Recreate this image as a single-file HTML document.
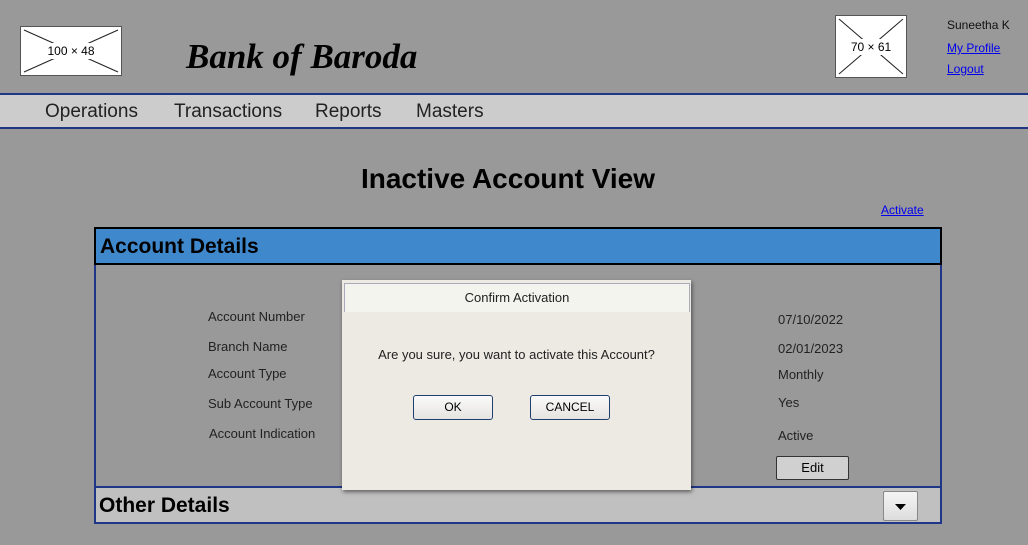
<!DOCTYPE html>
<html><head><style>
*{margin:0;padding:0;box-sizing:border-box}
body{width:1028px;height:545px;background:#999;font-family:"Liberation Sans",sans-serif;position:relative;overflow:hidden}
.a{position:absolute}
.ph{background:#fff;border:1px solid #555}
.t{font-size:13px;color:#222}
</style></head><body>
<div class="a ph" style="left:20px;top:26px;width:102px;height:50px">
<svg width="100" height="48" style="position:absolute;left:0;top:0"><line x1="3" y1="3" x2="97" y2="45" stroke="#222"/><line x1="97" y1="3" x2="3" y2="45" stroke="#222"/><rect x="22" y="16" width="56" height="16" fill="#fff"/></svg>
<div class="a" style="left:0;width:100px;top:17px;text-align:center;font-size:12px">100 × 48</div></div>
<div class="a" style="left:186px;top:37px;font-family:'Liberation Serif',serif;font-style:italic;font-weight:bold;font-size:35px">Bank of Baroda</div>
<div class="a ph" style="left:835px;top:15px;width:72px;height:63px">
<svg width="70" height="61" style="position:absolute;left:0;top:0"><line x1="3" y1="3" x2="67" y2="58" stroke="#222"/><line x1="67" y1="3" x2="3" y2="58" stroke="#222"/><rect x="13" y="23" width="44" height="16" fill="#fff"/></svg>
<div class="a" style="left:0;width:70px;top:24px;text-align:center;font-size:12px">70 × 61</div></div>
<div class="a" style="left:947px;top:18px;font-size:12px;color:#111">Suneetha K</div>
<div class="a" style="left:947px;top:41px;font-size:12px;color:#00e;text-decoration:underline">My Profile</div>
<div class="a" style="left:947px;top:62px;font-size:12px;color:#00e;text-decoration:underline">Logout</div>
<div class="a" style="left:0;top:93px;width:1028px;height:36px;background:#ccc;border-top:2px solid #1f3585;border-bottom:2px solid #1f3585"></div>
<div class="a" style="left:45px;top:101px;font-size:19px;color:#222">Operations</div>
<div class="a" style="left:174px;top:101px;font-size:19px;color:#222">Transactions</div>
<div class="a" style="left:315px;top:101px;font-size:19px;color:#222">Reports</div>
<div class="a" style="left:416px;top:101px;font-size:19px;color:#222">Masters</div>
<div class="a" style="left:0;width:1016px;top:163px;text-align:center;font-size:28px;font-weight:bold">Inactive Account View</div>
<div class="a" style="left:881px;top:203px;font-size:12px;color:#00e;text-decoration:underline">Activate</div>
<div class="a" style="left:94px;top:262px;width:848px;height:262px;border:2px solid #1f3585;border-top:none"></div>
<div class="a" style="left:94px;top:227px;width:848px;height:38px;background:#3f88cc;border:2px solid #000"></div>
<div class="a" style="left:100px;top:235px;font-size:21px;font-weight:bold">Account Details</div>
<div class="a t" style="left:208px;top:309px">Account Number</div>
<div class="a t" style="left:208px;top:339px">Branch Name</div>
<div class="a t" style="left:208px;top:366px">Account Type</div>
<div class="a t" style="left:208px;top:396px">Sub Account Type</div>
<div class="a t" style="left:209px;top:426px">Account Indication</div>
<div class="a t" style="left:778px;top:312px">07/10/2022</div>
<div class="a t" style="left:778px;top:341px">02/01/2023</div>
<div class="a t" style="left:778px;top:367px">Monthly</div>
<div class="a t" style="left:778px;top:395px">Yes</div>
<div class="a t" style="left:778px;top:428px">Active</div>
<div class="a" style="left:776px;top:456px;width:73px;height:24px;background:#d0d0d0;border:1px solid #333;border-radius:2px;text-align:center;font-size:13px;line-height:22px">Edit</div>
<div class="a" style="left:96px;top:486px;width:844px;height:36px;background:#c0c0c0;border-top:2px solid #1f3585"></div>
<div class="a" style="left:99px;top:494px;font-size:21px;font-weight:bold">Other Details</div>
<div class="a" style="left:883px;top:491px;width:35px;height:30px;background:linear-gradient(#f4f4f4,#ddd);border:1px solid #888;border-radius:2px"><svg width="33" height="28"><polygon points="11,12 22,12 16.5,18" fill="#000"/></svg></div>
<div class="a" style="left:342px;top:280px;width:349px;height:210px;background:#edeae4;box-shadow:1px 2px 4px rgba(0,0,0,.5)">
<div style="margin:3px 1px 0 2px;height:29px;background:#f4f4ee;border:1px solid #aab;border-bottom:none;text-align:center;font-size:13px;line-height:28px;color:#222">Confirm Activation</div>
<div class="a" style="left:0;width:349px;top:67px;text-align:center;font-size:13px;color:#222">Are you sure, you want to activate this Account?</div>
<div class="a" style="left:71px;top:115px;width:80px;height:25px;border:1px solid #1f3f6f;border-radius:3px;background:linear-gradient(#fafafa,#e6e4e0);text-align:center;font-size:12px;line-height:23px">OK</div>
<div class="a" style="left:188px;top:115px;width:80px;height:25px;border:1px solid #1f3f6f;border-radius:3px;background:linear-gradient(#fafafa,#e6e4e0);text-align:center;font-size:12px;line-height:23px">CANCEL</div>
</div>
</body></html>
